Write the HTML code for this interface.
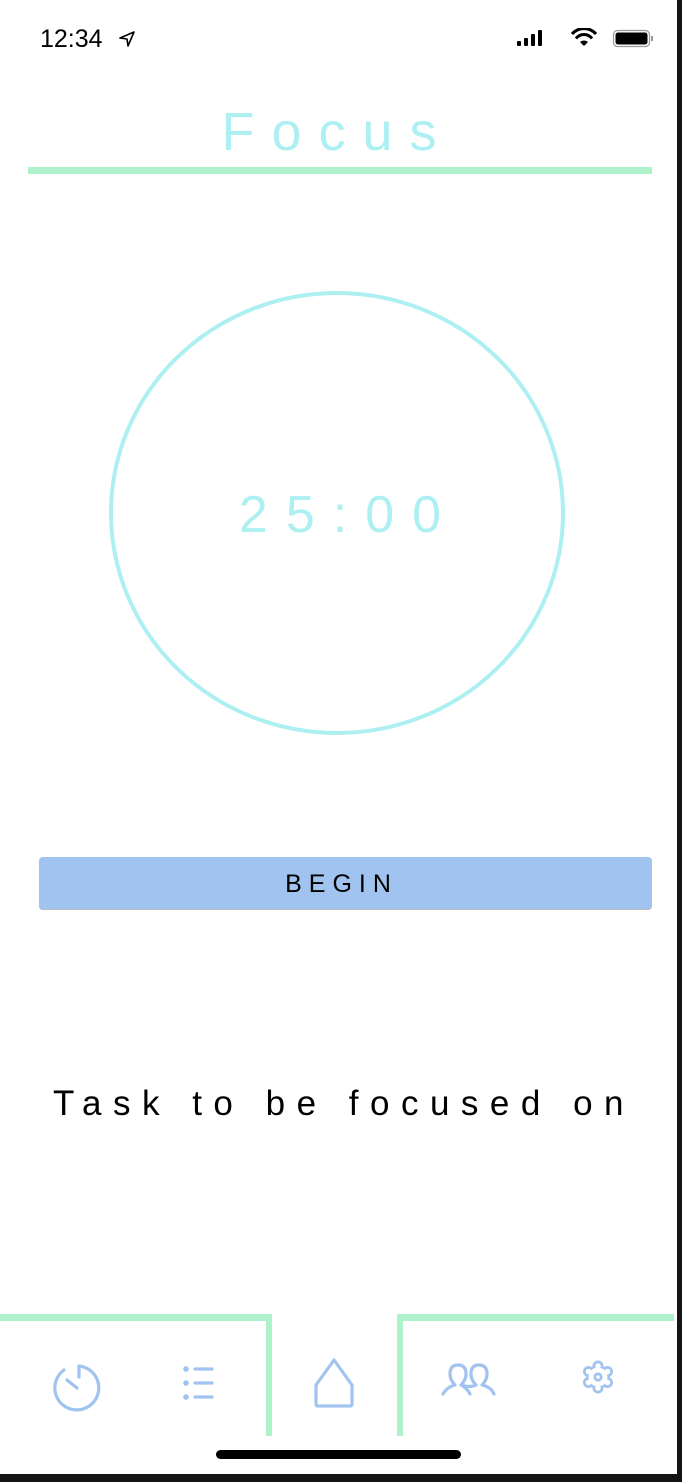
<!DOCTYPE html>
<html><head><style>
body{margin:0;width:682px;height:1482px;background:#fff;position:relative;overflow:hidden;font-family:"Liberation Sans",sans-serif}
.a{position:absolute}
</style></head><body>
<div class="a" style="left:677px;top:0;width:5px;height:1482px;background:#141414"></div>
<div class="a" style="left:0;top:1474px;width:682px;height:8px;background:#141414"></div>
<div class="a" style="left:40px;top:25px;font-size:25px;color:#000">12:34</div>
<svg class="a" style="left:118px;top:30px" width="18" height="18" viewBox="0 0 18 18"><path d="M16 2 L2 8 L9 9 L10 16 Z" fill="none" stroke="#000" stroke-width="1.6" stroke-linejoin="round"/></svg>
<svg class="a" style="left:515px;top:28px" width="140" height="22" viewBox="0 0 140 22">
<rect x="2" y="13" width="4" height="5" rx="1" fill="#000"/><rect x="9" y="10" width="4" height="8" rx="1" fill="#000"/><rect x="16" y="6" width="4" height="12" rx="1" fill="#000"/><rect x="23" y="2" width="4" height="16" rx="1" fill="#000"/>
<path d="M57 6 A16 16 0 0 1 81 6" stroke="#000" stroke-width="3" fill="none"/><path d="M61 10.5 A10 10 0 0 1 77 10.5" stroke="#000" stroke-width="3" fill="none"/><path d="M65 14 L69 18 L73 14 A6 6 0 0 0 65 14Z" fill="#000"/>
<rect x="98.5" y="2.5" width="36" height="16" rx="4" fill="none" stroke="#999" stroke-width="1.2"/><rect x="100.5" y="4.5" width="32" height="12" rx="2.5" fill="#000"/><rect x="136" y="8" width="2" height="5" fill="#999"/>
</svg>
<div class="a" style="left:-12px;width:682px;top:101px;text-align:center;font-size:54px;letter-spacing:17px;color:#aef0f2;text-indent:17px">Focus</div>
<div class="a" style="left:28px;top:167px;width:624px;height:7px;background:#aef2cc"></div>
<svg class="a" style="left:0;top:280px" width="682" height="470"><ellipse cx="337" cy="233" rx="226" ry="220" fill="none" stroke="#aef0f2" stroke-width="4"/></svg>
<div class="a" style="left:0;width:682px;top:485px;text-align:center;font-size:52px;letter-spacing:18px;color:#aef0f2;text-indent:16px">25:00</div>
<div class="a" style="left:39px;top:857px;width:613px;height:53px;background:#a1c3ef;border-radius:4px;box-shadow:0 -1px 0 0 #bbb inset;text-align:center;line-height:54px;font-size:25px;letter-spacing:7px;color:#000;text-indent:-8px">BEGIN</div>
<div class="a" style="left:3px;width:682px;top:1084px;text-align:center;font-size:35px;letter-spacing:11.5px;color:#000">Task to be focused on</div>
<div class="a" style="left:0;top:1314px;width:272px;height:7px;background:#aef2cc"></div>
<div class="a" style="left:266px;top:1314px;width:6px;height:122px;background:#aef2cc"></div>
<div class="a" style="left:397px;top:1314px;width:277px;height:7px;background:#aef2cc"></div>
<div class="a" style="left:397px;top:1314px;width:6px;height:122px;background:#aef2cc"></div>
<svg class="a" style="left:0;top:1350px" width="682" height="70" viewBox="0 0 682 70" fill="none" stroke="#a1c3ef" stroke-width="3.2" stroke-linecap="round" stroke-linejoin="round">
<path d="M64 20 A22 22 0 1 0 79 16 L79 27"/><path d="M67 30 L77 38"/>
<circle cx="186" cy="19" r="1.2" fill="#a1c3ef"/><circle cx="186" cy="33" r="1.2" fill="#a1c3ef"/><circle cx="186" cy="47" r="1.2" fill="#a1c3ef"/>
<path d="M195 19 H212 M195 33 H212 M195 47 H212"/>
<path d="M334 10 L352 35 V54 Q352 56 350 56 H318 Q316 56 316 54 V35 Z"/>
<path d="M443 44 Q447 37 455 35 Q450 30 450 24 Q450 15 458 15 Q466 15 466 24 Q466 30 461 35 Q466 37 470 44"/><path d="M461 35 Q470 38 476 35 Q471 30 471 24 Q471 15 479 15 Q487 15 487 24 Q487 30 482 35 Q491 37 494 44"/>
</svg>
<svg class="a" style="left:578px;top:1357px" width="40" height="40" viewBox="-20 -20 40 40">
<g fill="#a1c3ef"><circle r="12"/><circle cx="0" cy="-11" r="5.5"/><circle cx="9.5" cy="-5.5" r="5.5"/><circle cx="9.5" cy="5.5" r="5.5"/><circle cx="0" cy="11" r="5.5"/><circle cx="-9.5" cy="5.5" r="5.5"/><circle cx="-9.5" cy="-5.5" r="5.5"/></g>
<g fill="#fff"><circle r="9.5"/><circle cx="0" cy="-11" r="2.8"/><circle cx="9.5" cy="-5.5" r="2.8"/><circle cx="9.5" cy="5.5" r="2.8"/><circle cx="0" cy="11" r="2.8"/><circle cx="-9.5" cy="5.5" r="2.8"/><circle cx="-9.5" cy="-5.5" r="2.8"/></g>
<circle r="3.2" fill="none" stroke="#a1c3ef" stroke-width="2.8"/>
</svg>
<div class="a" style="left:216px;top:1450px;width:245px;height:9px;border-radius:5px;background:#000"></div>
</body></html>
